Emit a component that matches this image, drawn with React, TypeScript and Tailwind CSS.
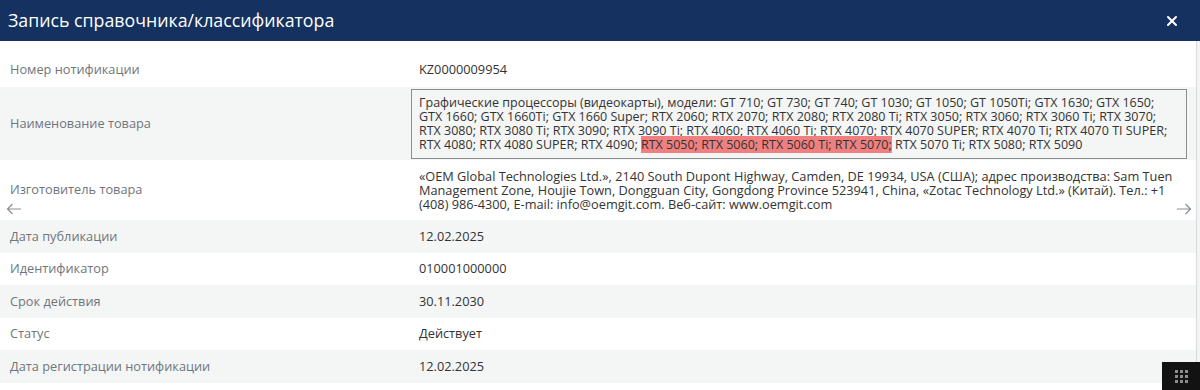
import { X } from "lucide-react";

const rows = [
  { label: "Дата публикации", value: "12.02.2025" },
  { label: "Идентификатор", value: "010001000000" },
  { label: "Срок действия", value: "30.11.2030" },
  { label: "Статус", value: "Действует" },
  { label: "Дата регистрации нотификации", value: "12.02.2025" },
];

function Arrow({ dir }: { dir: "left" | "right" }) {
  return (
    <svg width="16" height="12" viewBox="0 0 16 12" fill="none" stroke="#8a8f96" strokeWidth="1.2">
      {dir === "left" ? (
        <path d="M15 6H1.5M6.5 1L1.5 6l5 5" />
      ) : (
        <path d="M1 6h13.5M9.5 1l5 5-5 5" />
      )}
    </svg>
  );
}

export default function App() {
  return (
    <div
      className="relative w-[1200px] h-[390px] overflow-hidden bg-[#f3f4f4] text-[12.75px]"
      style={{ fontFamily: '"Open Sans", "Liberation Sans", sans-serif' }}
    >
      {/* Header */}
      <div className="h-[41px] bg-[#14315f] flex items-center justify-between pl-[8px] pr-[20px]">
        <h1 className="text-white text-[17.75px] leading-none">Запись справочника/классификатора</h1>
        <X className="w-[16px] h-[16px] text-white" strokeWidth={3} />
      </div>

      {/* Content */}
      <div className="relative mr-[3px] bg-white border-r border-[#d9dcdf] h-[349px] pt-[12px]">
        <div className="flex items-center h-[34px]">
          <div className="w-[411px] pl-[10px] text-[#6f757d]">Номер нотификации</div>
          <div className="pl-[8px] text-[#333]">KZ0000009954</div>
        </div>

        <div className="flex items-center h-[73px] bg-[#f4f5f5]">
          <div className="w-[411px] pl-[10px] text-[#6f757d]">Наименование товара</div>
          <div className="w-[776px] border border-[#8c8c8c] bg-[#f4f5f5] px-[7px] py-[6px] text-[12.5px] leading-[14px] text-[#333]">
            Графические процессоры (видеокарты), модели: GT 710; GT 730; GT 740; GT 1030; GT 1050; GT 1050Ti; GTX 1630; GTX 1650; GTX 1660; GTX 1660Ti; GTX 1660 Super; RTX 2060; RTX 2070; RTX 2080; RTX 2080 Ti; RTX 3050; RTX 3060; RTX 3060 Ti; RTX 3070; RTX 3080; RTX 3080 Ti; RTX 3090; RTX 3090 Ti; RTX 4060; RTX 4060 Ti; RTX 4070; RTX 4070 SUPER; RTX 4070 Ti; RTX 4070 TI SUPER; RTX 4080; RTX 4080 SUPER; RTX 4090;{" "}
            <span className="bg-[#f08080]">RTX 5050; RTX 5060; RTX 5060 Ti; RTX 5070;</span> RTX 5070 Ti; RTX 5080; RTX 5090
          </div>
        </div>

        <div className="flex items-center h-[60px]">
          <div className="w-[411px] pl-[10px] text-[#6f757d]">Изготовитель товара</div>
          <div className="w-[770px] pl-[8px] leading-[14px] text-[#333]">
            «OEM Global Technologies Ltd.», 2140 South Dupont Highway, Camden, DE 19934, USA (США); адрес производства: Sam Tuen Management Zone, Houjie Town, Dongguan City, Gongdong Province 523941, China, «Zotac Technology Ltd.» (Китай). Тел.: +1 (408) 986-4300, E-mail: info@oemgit.com. Веб-сайт: www.oemgit.com
          </div>
        </div>

        {rows.map((r, i) => (
          <div
            key={r.label}
            className={`flex items-center h-[32.5px] ${i % 2 === 0 ? "bg-[#f4f5f5]" : "bg-white"}`}
          >
            <div className="w-[411px] pl-[10px] text-[#6f757d]">{r.label}</div>
            <div className="pl-[8px] text-[#333]">{r.value}</div>
          </div>
        ))}

        {/* carousel arrows */}
        <div className="absolute left-[6px] top-[162px]">
          <Arrow dir="left" />
        </div>
        <div className="absolute right-[4px] top-[162px]">
          <Arrow dir="right" />
        </div>
      </div>

      {/* grid button */}
      <div className="absolute right-0 bottom-0 w-[38px] h-[28px] bg-[#121212] flex items-center justify-center">
        <div className="grid grid-cols-3 gap-[2px]">
          {Array.from({ length: 9 }).map((_, i) => (
            <div key={i} className="w-[3px] h-[3px] bg-[#8c8c8c]" />
          ))}
        </div>
      </div>
    </div>
  );
}
